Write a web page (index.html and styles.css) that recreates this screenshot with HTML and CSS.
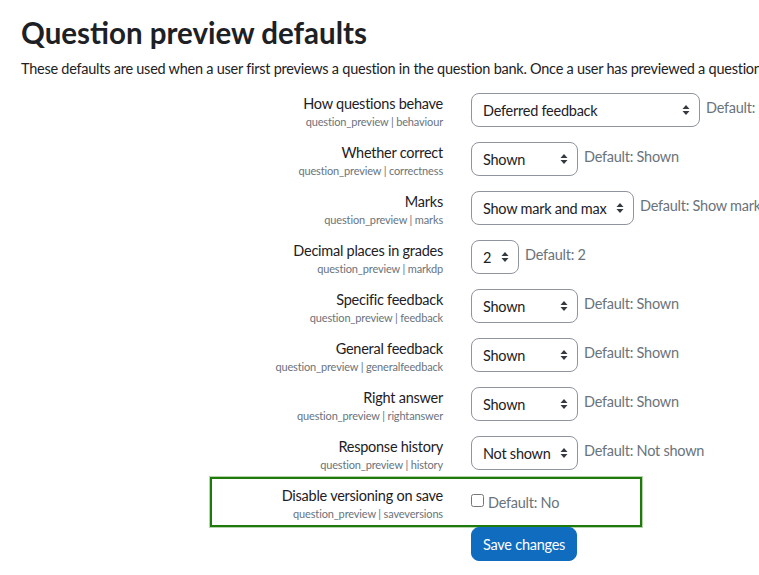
FILE: index.html
```html
<html>
    <head>
        <title>Question preview defaults</title>
        <link rel="stylesheet" href="styles.css">
    </head>
    <body>
        <div class="page">
            <h2>Question preview defaults</h2>
            <p class="intro">These defaults are used when a user first previews a question in the question bank. Once a user has previewed a question, their personal preferences are stored as user preferences.</p>

            <div class="settings">
                <div class="row">
                    <div class="label">
                        <div class="title">How questions behave</div>
                        <div class="key">question_preview | behaviour</div>
                    </div>
                    <div class="control">
                        <select class="custom-select">
                            <option>Adaptive mode</option>
                            <option>Adaptive mode (no penalties)</option>
                            <option selected>Deferred feedback</option>
                            <option>Deferred feedback with CBM</option>
                            <option>Immediate feedback</option>
                            <option>Immediate feedback with CBM</option>
                            <option>Interactive with multiple tries</option>
                        </select>
                        <span class="default">Default: Deferred feedback</span>
                    </div>
                </div>

                <div class="row">
                    <div class="label">
                        <div class="title">Whether correct</div>
                        <div class="key">question_preview | correctness</div>
                    </div>
                    <div class="control">
                        <select class="custom-select">
                            <option selected>Shown</option>
                            <option>Not shown</option>
                        </select>
                        <span class="default">Default: Shown</span>
                    </div>
                </div>

                <div class="row">
                    <div class="label">
                        <div class="title">Marks</div>
                        <div class="key">question_preview | marks</div>
                    </div>
                    <div class="control">
                        <select class="custom-select">
                            <option>Not shown</option>
                            <option>Show mark only</option>
                            <option selected>Show mark and max</option>
                        </select>
                        <span class="default">Default: Show mark and max</span>
                    </div>
                </div>

                <div class="row">
                    <div class="label">
                        <div class="title">Decimal places in grades</div>
                        <div class="key">question_preview | markdp</div>
                    </div>
                    <div class="control">
                        <select class="custom-select">
                            <option>0</option>
                            <option>1</option>
                            <option selected>2</option>
                            <option>3</option>
                            <option>4</option>
                            <option>5</option>
                            <option>6</option>
                            <option>7</option>
                        </select>
                        <span class="default">Default: 2</span>
                    </div>
                </div>

                <div class="row">
                    <div class="label">
                        <div class="title">Specific feedback</div>
                        <div class="key">question_preview | feedback</div>
                    </div>
                    <div class="control">
                        <select class="custom-select">
                            <option selected>Shown</option>
                            <option>Not shown</option>
                        </select>
                        <span class="default">Default: Shown</span>
                    </div>
                </div>

                <div class="row">
                    <div class="label">
                        <div class="title">General feedback</div>
                        <div class="key">question_preview | generalfeedback</div>
                    </div>
                    <div class="control">
                        <select class="custom-select">
                            <option selected>Shown</option>
                            <option>Not shown</option>
                        </select>
                        <span class="default">Default: Shown</span>
                    </div>
                </div>

                <div class="row">
                    <div class="label">
                        <div class="title">Right answer</div>
                        <div class="key">question_preview | rightanswer</div>
                    </div>
                    <div class="control">
                        <select class="custom-select">
                            <option selected>Shown</option>
                            <option>Not shown</option>
                        </select>
                        <span class="default">Default: Shown</span>
                    </div>
                </div>

                <div class="row">
                    <div class="label">
                        <div class="title">Response history</div>
                        <div class="key">question_preview | history</div>
                    </div>
                    <div class="control">
                        <select class="custom-select">
                            <option>Shown</option>
                            <option selected>Not shown</option>
                        </select>
                        <span class="default">Default: Not shown</span>
                    </div>
                </div>

                <div class="row row-check highlighted">
                    <div class="label">
                        <div class="title">Disable versioning on save</div>
                        <div class="key">question_preview | saveversions</div>
                    </div>
                    <div class="control">
                        <input type="checkbox" class="check" id="saveversions">
                        <label for="saveversions" class="default">Default: No</label>
                    </div>
                </div>

                <div class="row row-submit">
                    <div></div>
                    <div class="control">
                        <button class="btn-primary">Save changes</button>
                    </div>
                </div>
            </div>
        </div>
    </body>
</html>
```

FILE: styles.css
```css
* {
    font-family: Lato, 'Noto Sans', sans-serif;
}

body {
    margin: 0;
    color: #1d2125;
    background: #fff;
    overflow: hidden;
}

.page {
    padding: 0 0 0 21px;
    width: 1100px;
}

h2 {
    font-size: 29.5px;
    font-weight: 700;
    margin: 13px 0 0 0;
    line-height: 39px;
}

.intro {
    font-size: 14.5px;
    letter-spacing: -0.25px;
    line-height: 22px;
    margin: 6px 0 0 0;
    white-space: nowrap;
}

.settings {
    margin-top: 13px;
}

.row {
    display: grid;
    grid-template-columns: 422px auto;
    column-gap: 28px;
    height: 49px;
    position: relative;
}

.label {
    text-align: right;
    padding-top: 1px;
}

.title {
    font-size: 14.5px;
    letter-spacing: -0.25px;
    line-height: 20px;
}

.key {
    font-size: 11px;
    letter-spacing: -0.15px;
    line-height: 15px;
    color: #6a737b;
}

.control {
    display: flex;
    align-items: flex-start;
    gap: 6px;
}

.custom-select {
    appearance: none;
    -webkit-appearance: none;
    height: 34px;
    padding: 0 26px 0 11px;
    font-size: 14.5px;
    letter-spacing: -0.25px;
    color: #1d2125;
    background-color: #fff;
    border: 1px solid #8f959e;
    border-radius: 8px;
    background-image: url("data:image/svg+xml,%3Csvg xmlns='http://www.w3.org/2000/svg' width='8' height='10' viewBox='0 0 8 10'%3E%3Cpath fill='%23343a40' d='M4 0 L7.5 4 H0.5 Z M4 10 L0.5 6 H7.5 Z'/%3E%3C/svg%3E");
    background-repeat: no-repeat;
    background-position: right 9px center;
    background-size: 8px 10px;
}

.default {
    font-size: 14.5px;
    letter-spacing: -0.25px;
    color: #6a737b;
    line-height: 20px;
    padding-top: 5px;
}

.row-check {
    height: 42px;
}

.row-check .control {
    gap: 4px;
    padding-top: 3px;
}

.check {
    width: 13px;
    height: 13px;
    margin: 6px 0 0 0;
}

.highlighted::after {
    content: "";
    position: absolute;
    left: 189px;
    top: -8px;
    width: 432px;
    height: 50px;
    box-sizing: border-box;
    border: 2px solid #1f7a0c;
    outline: 1px solid #b6d3ae;
    pointer-events: none;
}

.btn-primary {
    background-color: #0f6cbf;
    border: 1px solid #0f6cbf;
    color: #fff;
    font-size: 14.5px;
    letter-spacing: -0.25px;
    height: 34px;
    padding: 0 11px;
    border-radius: 8px;
}
```
